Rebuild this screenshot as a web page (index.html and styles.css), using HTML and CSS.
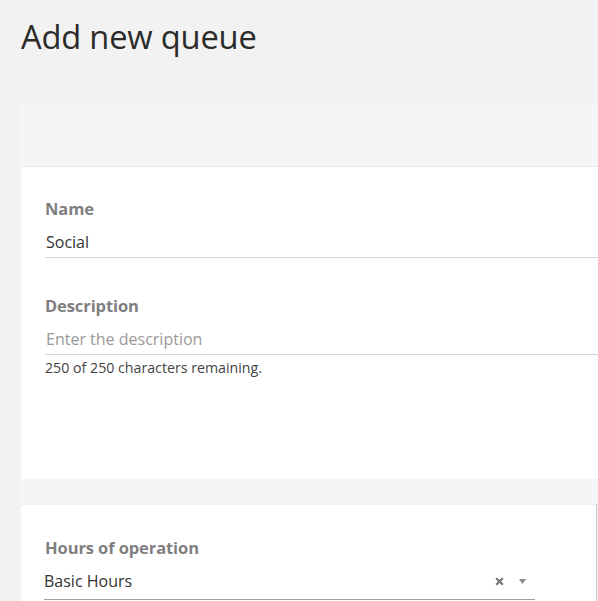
FILE: index.html
```html
<!DOCTYPE html>
<html>
<head>
<meta charset="utf-8">
<link rel="stylesheet" href="styles.css">
</head>
<body>
<div class="page">
  <h1 class="title">Add new queue</h1>
  <section class="card">
    <div class="card-head"></div>
    <div class="card-body">
      <div class="field">
        <label class="label">Name</label>
        <div class="input"><span class="value">Social</span></div>
      </div>
      <div class="field field-desc">
        <label class="label">Description</label>
        <div class="input"><span class="placeholder">Enter the description</span></div>
        <div class="hint">250 of 250 characters remaining.</div>
      </div>
    </div>
  </section>
  <div class="gap"></div>
  <section class="card2">
    <div class="body2">
      <div class="field">
        <label class="label label-offset">Hours of operation</label>
        <div class="input select">
          <span class="value">Basic Hours</span>
          <span class="controls">
            <svg class="clear" width="9" height="9" viewBox="0 0 9 9"><path d="M1.2 1.2 L7.8 7.8 M7.8 1.2 L1.2 7.8" stroke="#777" stroke-width="2.2"/></svg>
            <svg class="caret" width="7" height="5" viewBox="0 0 7 5"><path d="M0 0 H7 L3.5 5 Z" fill="#8a8a8a"/></svg>
          </span>
        </div>
      </div>
    </div>
  </section>
</div>
</body>
</html>
```

FILE: styles.css
```css
html, body {
  margin: 0;
  padding: 0;
  background: #f2f2f2;
  font-family: "Open Sans", "Noto Sans", sans-serif;
  overflow: hidden;
}
.page {
  padding: 0 0 0 21px;
}
.title {
  margin: 0;
  padding-top: 17px;
  height: 104px;
  box-sizing: border-box;
  font-size: 32.7px;
  font-weight: 400;
  color: #2b2b2b;
  line-height: 40px;
  letter-spacing: -0.2px;
}
.card {
  background: #fff;
  box-shadow: 0 1px 0 #c4c4c4, 0 2px 0 #e2e2e2;
}
.card-head {
  height: 62px;
  background: #f5f5f5;
  border-bottom: 1px solid #ececec;
}
.card-body {
  padding: 32px 0 0 24px;
  height: 312px;
  box-sizing: border-box;
}
.field {
  display: flex;
  flex-direction: column;
}
.field-desc {
  margin-top: 38px;
}
.label {
  font-size: 16.5px;
  font-weight: 700;
  color: #7f7f7f;
  line-height: 20px;
  letter-spacing: -0.1px;
}
.label-offset {
  padding-left: 1px;
}
.input {
  display: flex;
  align-items: center;
  height: 30px;
  margin-top: 8px;
  border-bottom: 1px solid #d5d5d5;
  font-size: 16px;
  padding-left: 1px;
}
.value {
  color: #333;
}
.placeholder {
  color: #9a9a9a;
}
.hint {
  font-size: 14.2px;
  font-weight: 500;
  color: #444;
  margin-top: 4px;
  line-height: 18px;
}
.gap {
  height: 25px;
  background: #f5f5f5;
}
.card2 {
  background: #fff;
  box-shadow: 1px 0 0 #c8c8c8;
  margin-right: 2px;
  border-top: 1px solid #efefef;
}
.body2 {
  padding: 33px 0 0 23px;
  height: 200px;
}
.select {
  width: 491px;
  height: 36px;
  margin-top: 5px;
  padding-left: 0;
  border-bottom-color: #a0a0a0;
  justify-content: space-between;
}
.controls {
  display: flex;
  align-items: center;
  gap: 15px;
  padding-right: 9px;
}
```
